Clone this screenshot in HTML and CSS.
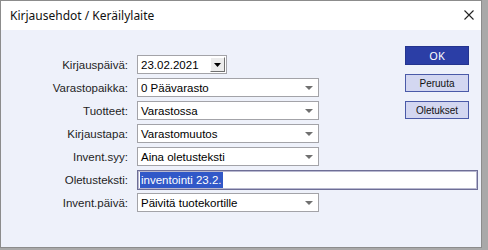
FILE: index.html
```html
<!DOCTYPE html>
<html lang="fi">
<head>
<meta charset="utf-8">
<title>Kirjausehdot / Keräilylaite</title>
<link rel="stylesheet" href="styles.css">
</head>
<body>
<div class="window">
  <div class="titlebar">
    <span class="title">Kirjausehdot / Keräilylaite</span>
    <svg class="close" width="10" height="10" viewBox="0 0 10 10"><path d="M0.5 0.5 L9.5 9.5 M9.5 0.5 L0.5 9.5" stroke="#222" stroke-width="1.1" fill="none"/></svg>
  </div>
  <div class="content">
    <div class="buttons">
      <button class="btn btn-ok">OK</button>
      <button class="btn">Peruuta</button>
      <button class="btn">Oletukset</button>
    </div>

    <label class="lbl r2">Kirjauspäivä:</label>
    <div class="field date r2"><span>23.02.2021</span><span class="dbtn"><svg width="7" height="4" viewBox="0 0 7 4"><path d="M0 0 H7 L3.5 4 Z" fill="#000"/></svg></span></div>

    <label class="lbl r3">Varastopaikka:</label>
    <div class="field select r3"><span>0 Päävarasto</span><svg class="arrow" width="8" height="4" viewBox="0 0 8 4"><path d="M0 0 H8 L4 4 Z" fill="#707070"/></svg></div>

    <label class="lbl r4">Tuotteet:</label>
    <div class="field select r4"><span>Varastossa</span><svg class="arrow" width="8" height="4" viewBox="0 0 8 4"><path d="M0 0 H8 L4 4 Z" fill="#707070"/></svg></div>

    <label class="lbl r5">Kirjaustapa:</label>
    <div class="field select r5"><span>Varastomuutos</span><svg class="arrow" width="8" height="4" viewBox="0 0 8 4"><path d="M0 0 H8 L4 4 Z" fill="#707070"/></svg></div>

    <label class="lbl r6">Invent.syy:</label>
    <div class="field select r6"><span>Aina oletusteksti</span><svg class="arrow" width="8" height="4" viewBox="0 0 8 4"><path d="M0 0 H8 L4 4 Z" fill="#707070"/></svg></div>

    <label class="lbl r7">Oletusteksti:</label>
    <div class="field text r7"><span class="sel">inventointi 23.2.</span></div>

    <label class="lbl r8">Invent.päivä:</label>
    <div class="field select r8"><span>Päivitä tuotekortille</span><svg class="arrow" width="8" height="4" viewBox="0 0 8 4"><path d="M0 0 H8 L4 4 Z" fill="#707070"/></svg></div>
  </div>
</div>
</body>
</html>
```

FILE: styles.css
```css
html, body {
  margin: 0;
  padding: 0;
}
body {
  width: 488px;
  height: 250px;
  background: #a9a9a9;
  font-family: "Liberation Sans", Arial, sans-serif;
  overflow: hidden;
}
.window {
  width: 482px;
  height: 248px;
  box-sizing: border-box;
  border: 1px solid #8c8c8c;
  background: #eef1fa;
}
.titlebar {
  height: 28px;
  background: #ffffff;
  display: flex;
  align-items: center;
  justify-content: space-between;
  padding: 0 7px 1px 9px;
}
.title {
  font-family: "Noto Sans", "Open Sans", sans-serif;
  font-size: 12px;
  color: #111;
}
.close {
  display: block;
  margin-top: -1px;
}
.content {
  display: grid;
  grid-template-columns: 127px 9px 182px 86px 64px 9px;
  grid-template-rows: 6px repeat(7, 20px);
  row-gap: 3px;
  padding-top: 16px;
}
.r2 { grid-row: 2; }
.r3 { grid-row: 3; }
.r4 { grid-row: 4; }
.r5 { grid-row: 5; }
.r6 { grid-row: 6; }
.r7 { grid-row: 7; }
.r8 { grid-row: 8; }
.lbl {
  grid-column: 1;
  font-size: 11.5px;
  color: #1e1e1e;
  text-align: right;
  line-height: 20px;
}
.field {
  grid-column: 3;
  box-sizing: border-box;
  height: 19px;
  border: 1px solid #a3a3a8;
  background: #ffffff;
  font-size: 11.5px;
  color: #000;
  display: flex;
  align-items: center;
  justify-content: space-between;
  padding-left: 3px;
}
.date {
  width: 90px;
  padding-right: 1px;
}
.dbtn {
  width: 15px;
  height: 15px;
  box-sizing: border-box;
  background: #ececec;
  border-top: 1px solid #ffffff;
  border-left: 1px solid #ffffff;
  border-right: 1px solid #707070;
  border-bottom: 1px solid #707070;
  display: flex;
  align-items: center;
  justify-content: center;
}
.dbtn svg { display: block; }
.select {
  padding-right: 5px;
}
.arrow { display: block; }
.text {
  grid-column: 3 / 7;
  height: 20px;
  border: 1px solid #6e6e96;
  box-shadow: inset 0 0 0 1px #b8b8d0;
  padding-left: 2px;
}
.sel {
  background: #3158c8;
  color: #ffffff;
  line-height: 16px;
  padding: 0 1px;
}
.buttons {
  grid-column: 5;
  grid-row: 1 / 6;
  display: flex;
  flex-direction: column;
  gap: 9px;
  align-self: start;
}
.btn {
  height: 18px;
  box-sizing: border-box;
  border: 1px solid #4a5aa8;
  background: #d3d7f1;
  font-family: "Liberation Sans", Arial, sans-serif;
  font-size: 10px;
  color: #111;
  padding: 0;
}
.btn-ok {
  height: 19px;
  background: #2b3ea6;
  border-color: #24348e;
  color: #ffffff;
  font-family: "Noto Sans", "Open Sans", sans-serif;
  font-size: 11px;
}
```
